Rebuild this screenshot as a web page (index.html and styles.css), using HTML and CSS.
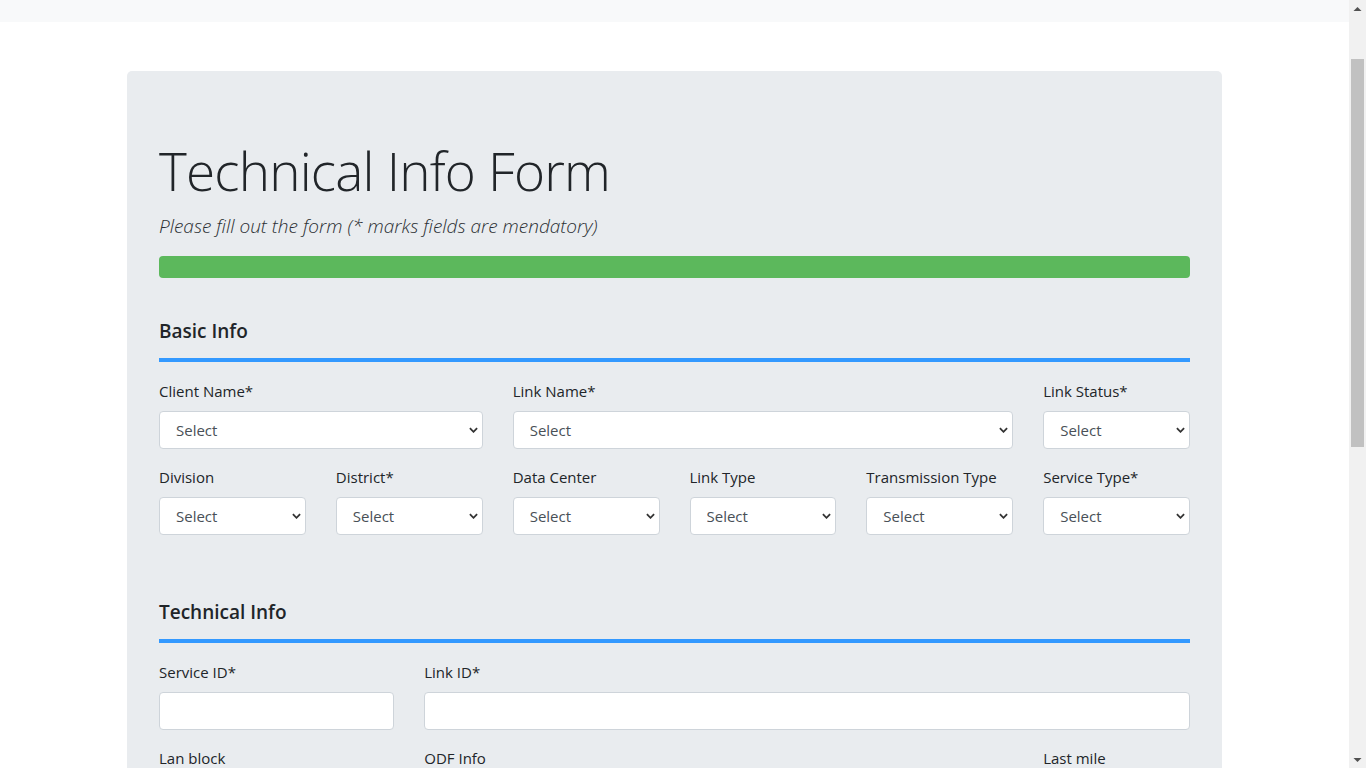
FILE: index.html
```html
<!DOCTYPE html>
<html lang="en">
<head>
<meta charset="utf-8">
<title>Technical Info Form</title>
<link rel="stylesheet" href="styles.css">
</head>
<body>
<div class="screen">
  <div class="viewport">
    <div class="topbar"></div>
    <div class="container">
      <div class="jumbotron">
        <h1 class="display">Technical Info Form</h1>
        <p class="lead">Please fill out the form (* marks fields are mendatory)</p>
        <div class="progress"><div class="progress-bar" style="width:100%"></div></div>

        <section class="section">
          <h4 class="section-title">Basic Info</h4>
          <div class="grid">
            <div class="field span-4">
              <label>Client Name*</label>
              <div class="select-wrap"><select class="control"><option>Select</option></select><svg class="chev" viewBox="0 0 10 6"><path d="M1 1l4 4 4-4"/></svg></div>
            </div>
            <div class="field span-6">
              <label>Link Name*</label>
              <div class="select-wrap"><select class="control"><option>Select</option></select><svg class="chev" viewBox="0 0 10 6"><path d="M1 1l4 4 4-4"/></svg></div>
            </div>
            <div class="field span-2">
              <label>Link Status*</label>
              <div class="select-wrap"><select class="control"><option>Select</option></select><svg class="chev" viewBox="0 0 10 6"><path d="M1 1l4 4 4-4"/></svg></div>
            </div>
            <div class="field span-2">
              <label>Division</label>
              <div class="select-wrap"><select class="control"><option>Select</option></select><svg class="chev" viewBox="0 0 10 6"><path d="M1 1l4 4 4-4"/></svg></div>
            </div>
            <div class="field span-2">
              <label>District*</label>
              <div class="select-wrap"><select class="control"><option>Select</option></select><svg class="chev" viewBox="0 0 10 6"><path d="M1 1l4 4 4-4"/></svg></div>
            </div>
            <div class="field span-2">
              <label>Data Center</label>
              <div class="select-wrap"><select class="control"><option>Select</option></select><svg class="chev" viewBox="0 0 10 6"><path d="M1 1l4 4 4-4"/></svg></div>
            </div>
            <div class="field span-2">
              <label>Link Type</label>
              <div class="select-wrap"><select class="control"><option>Select</option></select><svg class="chev" viewBox="0 0 10 6"><path d="M1 1l4 4 4-4"/></svg></div>
            </div>
            <div class="field span-2">
              <label>Transmission Type</label>
              <div class="select-wrap"><select class="control"><option>Select</option></select><svg class="chev" viewBox="0 0 10 6"><path d="M1 1l4 4 4-4"/></svg></div>
            </div>
            <div class="field span-2">
              <label>Service Type*</label>
              <div class="select-wrap"><select class="control"><option>Select</option></select><svg class="chev" viewBox="0 0 10 6"><path d="M1 1l4 4 4-4"/></svg></div>
            </div>
          </div>
        </section>

        <section class="section">
          <h4 class="section-title">Technical Info</h4>
          <div class="grid">
            <div class="field span-3">
              <label>Service ID*</label>
              <input class="control" type="text">
            </div>
            <div class="field span-9">
              <label>Link ID*</label>
              <input class="control" type="text">
            </div>
            <div class="field span-3">
              <label>Lan block</label>
              <input class="control" type="text">
            </div>
            <div class="field span-7">
              <label>ODF Info</label>
              <input class="control" type="text">
            </div>
            <div class="field span-2">
              <label>Last mile</label>
              <input class="control" type="text">
            </div>
          </div>
        </section>
      </div>
    </div>
  </div>
  <div class="scrollbar">
    <div class="sb-btn"><svg viewBox="0 0 17 17"><path d="M4.5 11h8l-4-4z"/></svg></div>
    <div class="sb-track"><div class="sb-thumb"></div></div>
    <div class="sb-btn"><svg viewBox="0 0 17 17"><path d="M4.5 7h8l-4 4z"/></svg></div>
  </div>
</div>
</body>
</html>
```
FILE: styles.css
```css
* { box-sizing: border-box; }
html, body { margin: 0; padding: 0; height: 100%; overflow: hidden; }
body {
  font-family: "Open Sans", "Noto Sans", "Liberation Sans", sans-serif;
  font-size: 16px;
  line-height: 1.5;
  color: #212529;
  background: #fff;
}
.screen { display: flex; height: 100vh; }
.viewport { flex: 1; overflow: hidden; min-width: 0; }
.topbar { height: 22px; background: #f8f9fa; }
.container { width: 1095px; margin: 49px auto 0; }
.jumbotron {
  background: #e9ecef;
  border-radius: 5px;
  padding: 66px 32px 40px;
}
.display {
  margin: 0;
  font-size: 53px;
  font-weight: 300;
  line-height: 67px;
  letter-spacing: -0.8px;
}
.lead {
  margin: 8px 0 16px;
  font-size: 19px;
  font-weight: 300;
  font-style: italic;
  line-height: 28px;
  color: #2b2f33;
}
.progress {
  height: 22px;
  border-radius: 4px;
  background: #e9ecef;
  overflow: hidden;
  margin-bottom: 41px;
}
.progress-bar { height: 100%; background: #5cb85c; }
.section { margin-bottom: 65px; }
.section-title {
  margin: 0 0 17px;
  font-size: 19px;
  font-weight: 600;
  line-height: 24px;
  padding-bottom: 15px;
  border-bottom: 4px solid #3399ff;
}
.grid {
  display: grid;
  grid-template-columns: repeat(12, 1fr);
  column-gap: 30px;
  row-gap: 16px;
}
.span-2 { grid-column: span 2; }
.span-3 { grid-column: span 3; }
.span-4 { grid-column: span 4; }
.span-6 { grid-column: span 6; }
.span-7 { grid-column: span 7; }
.span-9 { grid-column: span 9; }
.field label { display: block; margin-bottom: 8px; line-height: 24px; font-size: 15px; }
.control {
  display: block;
  width: 100%;
  height: 38px;
  padding: 6px 12px 6px 16px;
  font-family: inherit;
  font-size: 15px;
  color: #495057;
  background: #fff;
  border: 1px solid #ced4da;
  border-radius: 4px;
  outline: none;
}
.select-wrap { position: relative; }
select.control { -webkit-appearance: none; appearance: none; }
.chev {
  position: absolute;
  right: 5px;
  top: 16px;
  width: 9px;
  height: 6px;
  fill: none;
  stroke: #333;
  stroke-width: 2;
}
.scrollbar { width: 17px; display: flex; flex-direction: column; background: #f1f1f1; }
.sb-btn { height: 17px; }
.sb-btn svg { display: block; width: 17px; height: 17px; fill: #505050; }
.sb-track { flex: 1; padding-top: 42px; }
.sb-thumb { margin: 0 2px; height: 388px; background: #c1c1c1; }
```
